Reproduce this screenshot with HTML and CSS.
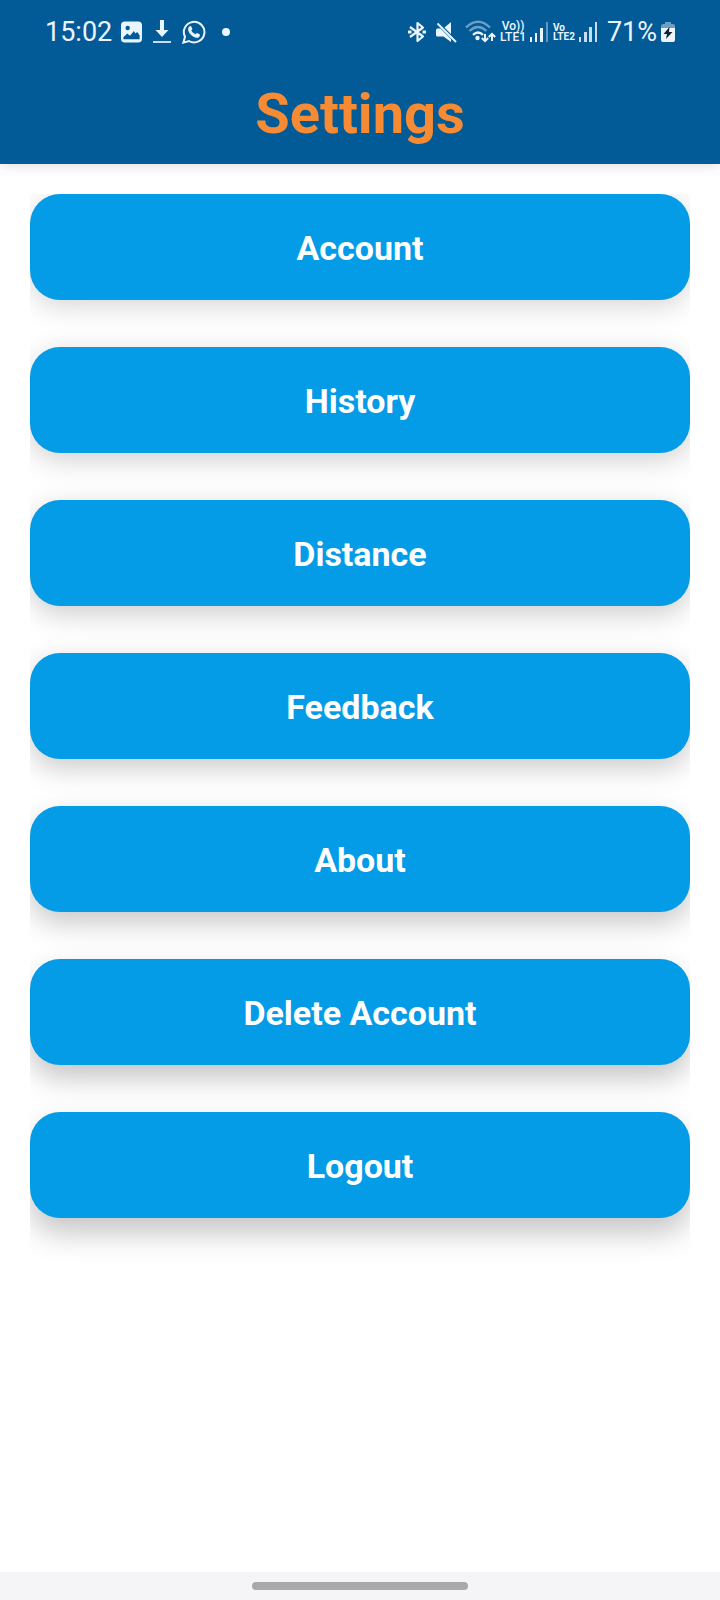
FILE: index.html
```html
<!DOCTYPE html>
<html lang="en">
<head>
<meta charset="utf-8">
<meta name="viewport" content="width=device-width, initial-scale=1">
<title>Settings</title>
<link rel="stylesheet" href="styles.css">
</head>
<body>
<header class="app-header">
  <div class="status-bar">
    <div class="status-left">
      <span class="clock">15:02</span>
      <svg width="21" height="22" viewBox="0 0 22 22" aria-hidden="true"><path fill="currentColor" fill-rule="evenodd" d="M4 0H18Q22 0 22 4V18Q22 22 18 22H4Q0 22 0 18V4Q0 0 4 0ZM7 4.500A2.300 2.300 0 1 0 7 9.100A2.300 2.300 0 1 0 7 4.500ZM2.500 18.500H19.500V14.500L17 11L15 12.500L13.500 10L9.500 15L6.500 12.500L2.500 16.500Z"/></svg>
      <svg width="18" height="24" viewBox="0 0 18 24" aria-hidden="true"><path fill="currentColor" d="M7 0H11V10H15.500L9 17L2.500 10H7Z"/><path fill="currentColor" opacity=".85" d="M0 21H18V23H0Z"/></svg>
      <svg width="24" height="24" viewBox="0 0 24 24" aria-hidden="true"><path fill="none" stroke="currentColor" stroke-width="2" d="M1.400 22.600L3 16.800A10.300 10.300 0 1 1 7 21Z"/><path fill="currentColor" d="M7.200 6.500C8 5.700 9 5.700 9.300 6.400L10.300 8.700C10.500 9.300 9.500 10.200 9.300 10.500C10.200 12.200 11.700 13.500 13.500 14.300C14 14 14.700 12.900 15.200 13.100L17.600 14.300C18.300 14.700 17.900 16.500 16.900 17.200C15.500 18.200 13.300 17.800 11 16.400C8.800 15 6.800 12.500 6.300 10.400C5.900 8.800 6.400 7.300 7.200 6.500Z"/></svg>
      <span class="dot"></span>
    </div>
    <div class="status-right">
      <svg width="18" height="22" viewBox="0 0 18 22" aria-hidden="true"><path fill="none" stroke="currentColor" stroke-width="2.200" stroke-linejoin="round" d="M2 6L15 15.500L9.500 20V2L15 6.500L2 16"/><path fill="currentColor" d="M0 9.500H3.500V12.500H0ZM14.500 9.500H18V12.500H14.500Z"/></svg>
      <svg class="mute" width="21" height="21" viewBox="0 0 21 21" aria-hidden="true"><path fill="currentColor" d="M0 8Q0 6.500 1.500 6.500H4.500L15 17V20L7.500 14.500H1.500Q0 14.500 0 13ZM8.500 5.500L15 0V12Z"/><path stroke="currentColor" stroke-width="2" d="M1.500 1.500L20 20"/></svg>
      <svg class="wifi" width="31" height="24" viewBox="0 0 31 24" aria-hidden="true"><g fill="none" stroke="currentColor" stroke-width="2.400"><path opacity=".45" d="M1 7.500Q13 -4 25 7.500M4.500 11Q13 3 21.500 11"/><path d="M8 14.800Q13 10 18 14.800"/><path stroke-width="2" d="M20 14V21M16.800 18L20 21.200L23.200 18M27 21V14M23.800 17L27 13.800L30.200 17"/></g><circle cx="12.500" cy="18" r="2.200" fill="currentColor"/></svg>
      <span class="network network-one"><span>Vo))</span><span>LTE1</span></span>
      <svg class="signal" width="19" height="20" viewBox="0 0 19 20" aria-hidden="true"><path fill="currentColor" d="M0 15H2V20H0ZM5 11H7V20H5ZM10 6H13V20H10Z"/><path fill="currentColor" opacity=".4" d="M16 0H18V20H16Z"/></svg>
      <span class="network network-two"><span>Vo</span><span>LTE2</span></span>
      <svg class="signal" width="19" height="20" viewBox="0 0 19 20" aria-hidden="true"><path fill="currentColor" opacity=".85" d="M0 15H2V20H0ZM5 10H8V20H5ZM10 5H13V20H10ZM16 0H18V20H16Z"/></svg>
      <span class="percent">71%</span>
      <svg width="14" height="20" viewBox="0 0 14 20" aria-hidden="true"><path fill="currentColor" opacity=".45" d="M4 0H10V2H12Q14 2 14 4V6H0V4Q0 2 2 2H4Z"/><path fill="currentColor" d="M0 6H14V18Q14 20 12 20H2Q0 20 0 18Z"/><path fill="#15212b" d="M8.500 5L2.500 12H6L5 17L11.500 10H8Z"/></svg>
    </div>
  </div>
  <h1 class="title">Settings</h1>
</header>
<main class="content">
  <nav class="menu" aria-label="Settings">
    <button class="menu-button" type="button">Account</button>
    <button class="menu-button" type="button">History</button>
    <button class="menu-button" type="button">Distance</button>
    <button class="menu-button" type="button">Feedback</button>
    <button class="menu-button" type="button">About</button>
    <button class="menu-button" type="button">Delete Account</button>
    <button class="menu-button" type="button">Logout</button>
  </nav>
</main>
<footer class="gesture-bar"><span class="gesture-handle"></span></footer>
</body>
</html>
```
FILE: styles.css
```css
* {
  box-sizing: border-box;
}

body {
  margin: 0;
  min-height: 100vh;
  display: flex;
  flex-direction: column;
  background: #fff;
  font-family: Roboto, "Liberation Sans", sans-serif;
}

.app-header {
  background: #025a97;
  box-shadow: 0 1px 12px rgba(0, 0, 0, 0.14);
  padding-bottom: 16px;
}

.status-bar {
  height: 64px;
  padding: 0 45px;
  display: flex;
  align-items: center;
  justify-content: space-between;
  color: #ebf5ff;
}

.status-left,
.status-right {
  display: flex;
  align-items: center;
}

.status-left {
  gap: 11px;
}

.status-right {
  gap: 4px;
}

.clock,
.percent {
  font-size: 27px;
  line-height: 32px;
}

.clock {
  margin-right: -2px;
}

.percent {
  margin-left: 5px;
}

.dot {
  width: 8px;
  height: 8px;
  margin-left: 5px;
  border-radius: 50%;
  background: currentColor;
}

.mute {
  margin-left: 6px;
}

.wifi {
  margin-left: 4px;
}

.network {
  display: flex;
  flex-direction: column;
  align-items: center;
  font-weight: 500;
  font-size: 12px;
  line-height: 11px;
}

.network-two {
  align-items: flex-start;
  font-weight: 700;
  font-size: 10px;
  line-height: 9px;
}

.title {
  margin: 0;
  padding-top: 16px;
  text-align: center;
  font-size: 56px;
  font-weight: 700;
  line-height: 68px;
  color: #f68b33;
}

.content {
  flex: 1;
  padding: 30px;
}

.menu {
  display: flex;
  flex-direction: column;
  gap: 47px;
  padding-bottom: 60px;
  overflow: hidden;
}

.menu-button {
  height: 106px;
  padding: 2px 16px 0;
  border: 0;
  border-radius: 30px;
  background: #049be7;
  color: #fff;
  font-family: inherit;
  font-size: 34px;
  font-weight: 700;
  line-height: 40px;
  box-shadow: 0 6px 28px rgba(0, 0, 0, 0.17);
}

.menu-button:nth-child(2) {
  box-shadow: 0 7px 28px rgba(0, 0, 0, 0.19);
}

.menu-button:nth-child(3) {
  box-shadow: 0 8px 28px rgba(0, 0, 0, 0.2);
}

.menu-button:nth-child(4) {
  box-shadow: 0 9px 28px rgba(0, 0, 0, 0.21);
}

.menu-button:nth-child(5) {
  box-shadow: 0 11px 28px rgba(0, 0, 0, 0.22);
}

.menu-button:nth-child(6) {
  box-shadow: 0 13px 28px rgba(0, 0, 0, 0.23);
}

.menu-button:nth-child(7) {
  box-shadow: 0 15px 30px rgba(0, 0, 0, 0.23);
}

.gesture-bar {
  height: 28px;
  display: flex;
  align-items: center;
  justify-content: center;
  background: #f5f5f7;
}

.gesture-handle {
  width: 30%;
  height: 8px;
  border-radius: 4px;
  background: #a9a9a9;
}
```
